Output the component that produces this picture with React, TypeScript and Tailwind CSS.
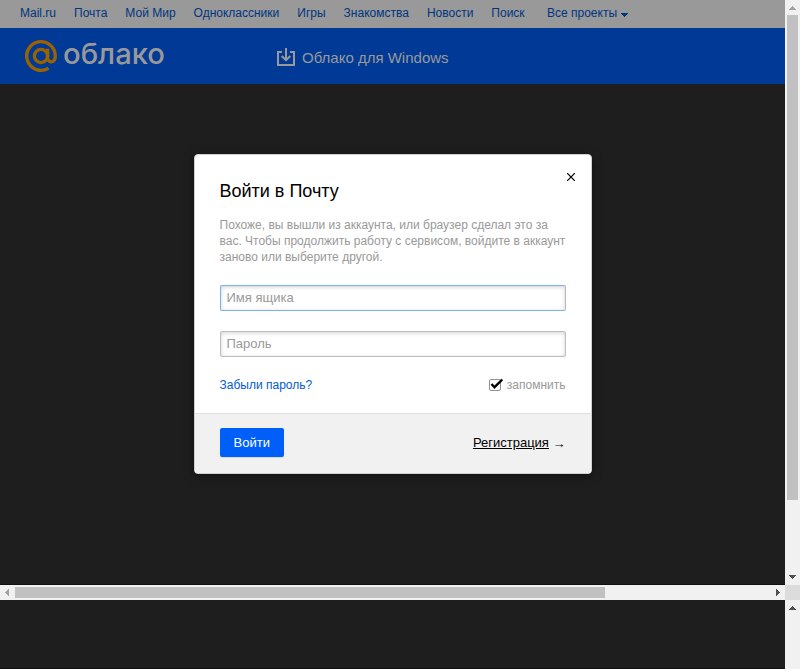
import React from "react";

const links = ["Mail.ru", "Почта", "Мой Мир", "Одноклассники", "Игры", "Знакомства", "Новости", "Поиск"];

function Arrow({ points, fill }: { points: string; fill: string }) {
  return (
    <svg width="15" height="15" viewBox="0 0 15 15" shapeRendering="crispEdges" className="block shrink-0">
      <polygon points={points} fill={fill} />
    </svg>
  );
}

function Logo() {
  return (
    <svg width="150" height="48" viewBox="0 0 150 48" overflow="visible" className="mt-2 block shrink-0" role="img">
      <g fill="none" stroke="#996300" strokeWidth="3.4" strokeLinecap="butt">
        <circle cx="20" cy="20" r="6.6" />
        <path d="M26.6 12.8V21.5C26.6 27.6 34.3 27.4 34.3 20A14.3 14.3 0 1 0 27.6 32.1" />
      </g>
      <text
        x="42"
        y="28.4"
        textLength="102"
        lengthAdjust="spacingAndGlyphs"
        fill="#999"
        className="font-['Inter','Noto_Sans',sans-serif] text-[29px] leading-none font-medium"
      >
        облако
      </text>
    </svg>
  );
}

function PortalMenu() {
  return (
    <nav className="flex h-7 bg-[#999] pl-5 text-[12px] leading-[26px] text-[#003580]">
      <div className="flex gap-[18px]">
        {links.map((l) => (
          <a key={l}>{l}</a>
        ))}
      </div>
      <a className="ml-[22.4px] flex">
        Все проекты
        <svg width="8" height="4" viewBox="0 0 8 4" className="mt-[13px] ml-[3px]" shapeRendering="crispEdges">
          <path d="M0 0H8L4 4Z" fill="#003580" />
        </svg>
      </a>
    </nav>
  );
}

function Modal() {
  return (
    <section className="flex h-80 w-[398px] flex-col overflow-hidden rounded-[4px] border border-[#d0d0d0] bg-white shadow-[0_2px_10px_rgba(0,0,0,0.5)]">
      <div className="flex h-[259px] shrink-0 flex-col border-b border-[#e0e0e0] px-[25px]">
        <div className="flex justify-between">
          <h1 className="mt-[25px] text-[18px] leading-[22px] text-black">Войти в Почту</h1>
          <svg width="8" height="8" viewBox="0 0 8 8" className="mt-[18px] -mr-[9px]">
            <path d="M0 0L8 8M8 0L0 8" stroke="#000" strokeWidth="1.2" />
          </svg>
        </div>
        <p className="mt-[15px] text-[12px] leading-4 whitespace-nowrap text-[#999]">
          Похоже, вы вышли из аккаунта, или браузер сделал это за
          <br />
          вас. Чтобы продолжить работу с сервисом, войдите в аккаунт
          <br />
          заново или выберите другой.
        </p>
        <input
          placeholder="Имя ящика"
          className="mt-5 h-[26px] w-full rounded-[2px] border border-[#7eb1ea] border-r-[#b8b8b8] px-[6px] pb-[2px] text-[13px] shadow-[inset_0_1px_4px_rgba(0,0,0,0.18)] outline-none placeholder:text-[#999]"
        />
        <input
          placeholder="Пароль"
          className="mt-5 h-[26px] w-full rounded-[2px] border border-[#bdbdbd] px-[6px] pb-[2px] text-[13px] shadow-[inset_0_1px_4px_rgba(0,0,0,0.18)] outline-none placeholder:text-[#999]"
        />
        <div className="mt-5 flex justify-between text-[12px] leading-4">
          <a className="text-[#005bd1]">Забыли пароль?</a>
          <label className="flex text-[#999]">
            <svg width="15" height="14" viewBox="0 0 15 14" className="mt-px mr-[3px]">
              <rect x="0.5" y="1.5" width="11" height="11" rx="1.5" fill="#fff" stroke="#919191" />
              <path d="M2.5 6L5.5 9.2L13.3 1.5" fill="none" stroke="#000" strokeWidth="2.4" />
            </svg>
            запомнить
          </label>
        </div>
      </div>
      <div className="flex grow items-start justify-between bg-[#f1f1f1] px-[25px] pt-[14px] text-[13px]">
        <button className="h-[29px] w-16 rounded-[2px] bg-[#005ff9] pl-[0.6px] text-white shadow-[0_1px_1px_rgba(0,0,0,0.1)]">
          Войти
        </button>
        <div className="flex gap-[3.6px] leading-[29px] text-black">
          <a className="underline">Регистрация</a>
          <span className="mt-px">→</span>
        </div>
      </div>
    </section>
  );
}

export default function App() {
  return (
    <div className="h-[669px] w-[800px] overflow-hidden bg-[#1e1e1e] font-['Liberation_Sans',Arial,sans-serif]">
      <div className="flex h-[585px]">
        <main className="flex w-[785px] flex-col">
          <PortalMenu />
          <header className="flex h-14 bg-[#003996] pl-[21px]">
            <Logo />
            <a className="ml-[106px] flex h-14 items-center text-[15px] text-[#999]">
              <svg width="18" height="18" viewBox="0 0 18 18" className="mt-[2px] mr-[7px]">
                <path d="M5 4H1V17H17V4H13M9 0V12M4.7 8L9 12.2L13.3 8" fill="none" stroke="#999" strokeWidth="2" />
              </svg>
              <span className="mt-1">Облако для Windows</span>
            </a>
          </header>
          <div className="flex grow justify-center border-b border-[#111] pt-[70px]">
            <Modal />
          </div>
        </main>
        <div className="flex w-[15px] flex-col items-center bg-[#f1f1f1]">
          <Arrow points="4,10 11,10 7.5,6" fill="#a3a3a3" />
          <div className="h-[485px] w-[11px] bg-[#c1c1c1]" />
          <div className="grow" />
          <Arrow points="4,5 11,5 7.5,9" fill="#505050" />
        </div>
      </div>
      <div className="flex h-[15px] items-center bg-[#f1f1f1]">
        <Arrow points="9,4 9,11 5,7.5" fill="#a3a3a3" />
        <div className="h-[11px] w-[590px] bg-[#c1c1c1]" />
        <div className="grow" />
        <Arrow points="6,4 6,11 10,7.5" fill="#505050" />
        <div className="h-[15px] w-[15px] bg-[#dcdcdc]" />
      </div>
      <div className="flex h-[69px]">
        <div className="w-[785px] border-b border-[#111]" />
        <div className="w-[15px] bg-[#f1f1f1]">
          <Arrow points="4,10 11,10 7.5,6" fill="#505050" />
        </div>
      </div>
    </div>
  );
}
